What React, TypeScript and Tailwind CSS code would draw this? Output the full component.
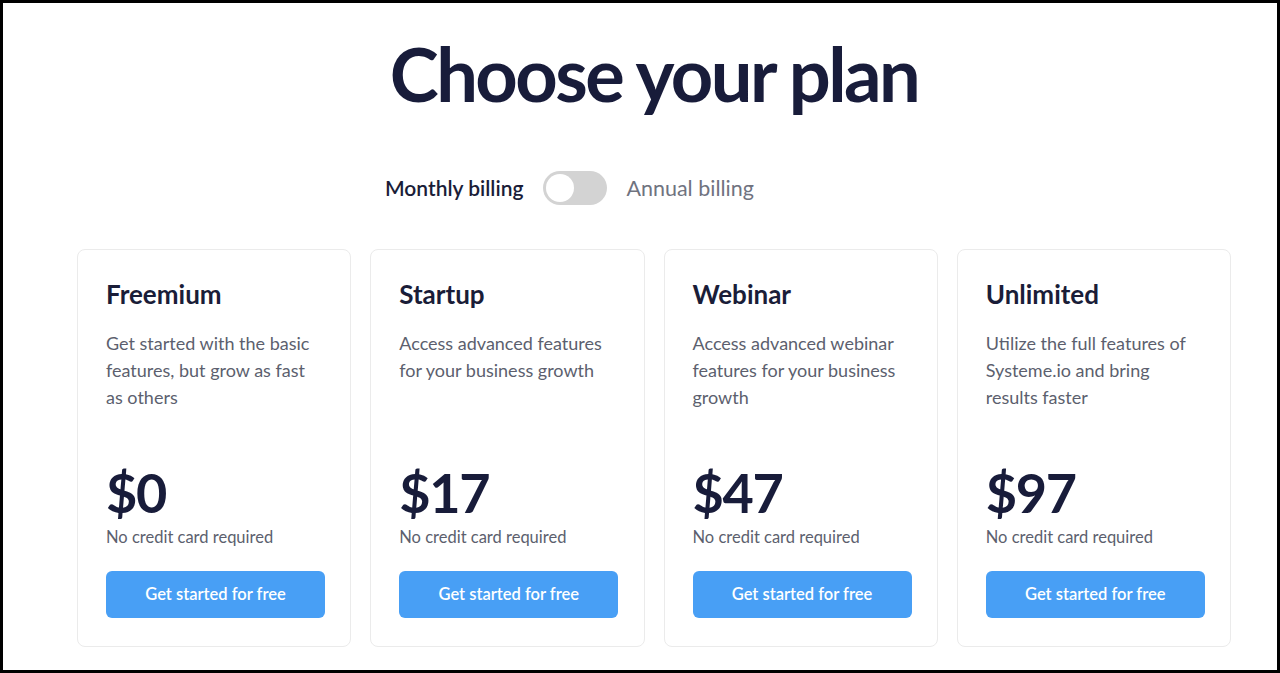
import React from 'react';

const plans = [
  {
    name: 'Freemium',
    description: 'Get started with the basic features, but grow as fast as others',
    price: '$0',
  },
  {
    name: 'Startup',
    description: 'Access advanced features for your business growth',
    price: '$17',
  },
  {
    name: 'Webinar',
    description: 'Access advanced webinar features for your business growth',
    price: '$47',
  },
  {
    name: 'Unlimited',
    description: 'Utilize the full features of Systeme.io and bring results faster',
    price: '$97',
  },
];

export default function App() {
  return (
    <div
      className="h-[673px] overflow-hidden border-[3px] border-black bg-white text-[#1a1d38]"
      style={{ fontFamily: 'Lato, "Noto Sans", sans-serif' }}
    >
      <div className="ml-[74px] w-[1154px]">
        {/* Heading */}
        <h1 className="pt-[27px] text-center text-[74px] leading-[88px] font-bold tracking-[-0.035em] text-[#181c3a]">
          Choose your plan
        </h1>

        {/* Billing toggle */}
        <div className="mt-[53px] flex items-center pl-[308px]">
          <span className="text-[21px] font-semibold text-[#1a1d38]">Monthly billing</span>
          <button className="ml-[20px] flex h-[34px] w-[64px] items-center rounded-full bg-[#d3d3d3] pl-[3px]">
            <span className="h-[28px] w-[28px] rounded-full bg-white" />
          </button>
          <span className="ml-[19px] text-[21.5px] text-[#70737f]">Annual billing</span>
        </div>

        {/* Plans */}
        <div className="mt-[44px] grid grid-cols-4 gap-[19px]">
          {plans.map((plan) => (
            <div
              key={plan.name}
              className="flex h-[398px] flex-col rounded-lg border border-[#ebebeb] bg-white p-7"
            >
              <h3 className="text-[26px] leading-8 font-bold text-[#1a1d38]">{plan.name}</h3>
              <p className="mt-5 text-[18px] leading-[27px] text-[#5c5f6e]">{plan.description}</p>
              <div className="mt-auto text-[54px] leading-[56px] font-bold tracking-tight text-[#181c3a]">
                {plan.price}
              </div>
              <p className="mt-1 text-[16.5px] leading-6 text-[#5c5f6e]">No credit card required</p>
              <button className="mt-[22px] h-[47px] w-[219px] rounded-md bg-[#489ff5] text-[16.5px] font-semibold text-white">
                Get started for free
              </button>
            </div>
          ))}
        </div>
      </div>
    </div>
  );
}
